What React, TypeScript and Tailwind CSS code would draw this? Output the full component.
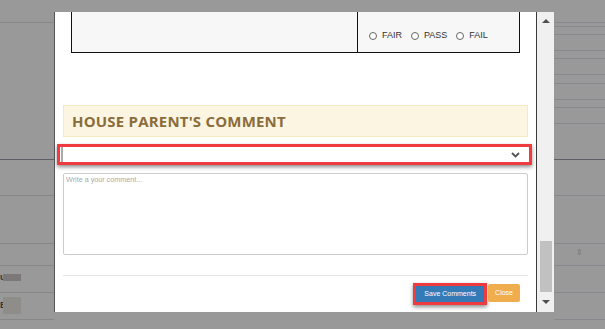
import React from "react";

function Radio({ label }: { label: string }) {
  return (
    <span className="flex items-center gap-[5px]">
      <span className="w-[8px] h-[8px] rounded-full border border-[#666] bg-white" />
      <span>{label}</span>
    </span>
  );
}

function Scrollbar() {
  return (
    <div className="w-[18px] h-full border-l-[1.5px] border-[#3a3a3a] bg-[#f0f0f0] flex flex-col items-center">
      <div className="h-[16px] flex items-center">
        <div className="w-0 h-0 border-l-[4px] border-r-[4px] border-b-[4px] border-l-transparent border-r-transparent border-b-[#505050] mt-[2px]" />
      </div>
      <div className="flex-1" />
      <div className="w-[12px] h-[51px] bg-[#c1c1c1]" />
      <div className="h-[20px] flex items-center">
        <div className="w-0 h-0 border-l-[4px] border-r-[4px] border-t-[4px] border-l-transparent border-r-transparent border-t-[#505050]" />
      </div>
    </div>
  );
}

export default function App() {
  const leftLines = [22, 159, 195, 243, 265, 292, 319];
  const rightLines = [22, 26, 34, 50, 58, 74, 83, 99, 107, 123, 159, 195, 243, 265, 292, 319];

  return (
    <div className="relative w-[605px] h-[329px] bg-[#999999] overflow-hidden font-['Liberation_Sans',Arial,sans-serif]">
      {/* page behind the overlay */}
      {leftLines.map((y) => (
        <div key={"l" + y} className="absolute left-0 w-[54px] h-px bg-[#878787]" style={{ top: y }} />
      ))}
      {rightLines.map((y) => (
        <div key={"r" + y} className="absolute right-0 w-[51px] h-px bg-[#86898e]" style={{ top: y }} />
      ))}
      <div className="absolute left-0 top-[159px] w-full h-px bg-[#5c6066]" />
      <div className="absolute left-0 top-[273px] text-[9px] font-bold text-[#333] leading-none">u</div>
      <div className="absolute left-[3px] top-[274px] w-[18px] h-[7px] bg-[#7d7878]" />
      <div className="absolute left-0 top-[301px] text-[9px] font-bold text-[#333] leading-none">E</div>
      <div className="absolute left-[3px] top-[297px] w-[18px] h-[17px] bg-[#8f8d8a]" />
      <div className="absolute left-[576px] top-[249px] text-[8px] text-[#777] leading-none">⇕</div>

      {/* modal */}
      <div className="absolute left-[54px] top-[12px] w-[500px] h-[300px] bg-white border-l border-[#555] flex">
        <div className="flex-1 flex flex-col overflow-hidden">
          <div className="mx-[16px] h-[41px] border border-t-0 border-[#111] bg-[#f7f7f7] flex">
            <div className="w-[286px] border-r border-[#111]" />
            <div className="flex-1 flex items-end pb-[12px] pl-[11px] gap-[9px] text-[9px] text-[#333] leading-none">
              <Radio label="FAIR" />
              <Radio label="PASS" />
              <Radio label="FAIL" />
            </div>
          </div>

          <div className="mt-[52px] mx-[8px] h-[32px] bg-[#fcf5e1] border border-[#f6e8c3] flex items-center px-[8px]">
            <span className="font-['Open_Sans',sans-serif] font-bold text-[15px] text-[#8a6d3b] tracking-[0.2px]">
              HOUSE PARENT'S COMMENT
            </span>
          </div>

          <div className="mt-[7px] ml-[2px] mr-[4px] h-[21px] border-[3px] border-[#ef3b40] shadow-[0_2px_4px_rgba(0,0,0,0.45)] bg-white pl-[1px]">
            <div className="h-full border-l-2 border-[#aaa] flex items-center justify-end pr-[9px]">
              <svg width="9" height="6" viewBox="0 0 9 6">
                <path d="M1 1 L4.5 4.5 L8 1" fill="none" stroke="#555" strokeWidth="1.8" />
              </svg>
            </div>
          </div>

          <div className="mt-[8px] mx-[8px] h-[82px] border border-[#ccc] rounded-[2px] px-[2px] py-[2px]">
            <span className="block text-[7.2px] text-[#a8a8a8] leading-none">Write a your comment...</span>
          </div>

          <div className="mt-[20px] mx-[8px] h-px bg-[#e5e5e5]" />

          <div className="mt-[7px] mr-[16px] flex justify-end items-start gap-[1px]">
            <div className="h-[22px] border-[3px] border-[#ef3b40] shadow-[0_2px_4px_rgba(0,0,0,0.45)] flex">
              <div className="h-full px-[8px] bg-[#337ab7] flex items-center text-[7px] text-white">Save Comments</div>
            </div>
            <div className="mt-[1px] h-[18px] px-[7px] bg-[#f0ad4e] rounded-[2px] flex items-center text-[7px] text-white">Close</div>
          </div>
        </div>
        <Scrollbar />
      </div>
    </div>
  );
}
